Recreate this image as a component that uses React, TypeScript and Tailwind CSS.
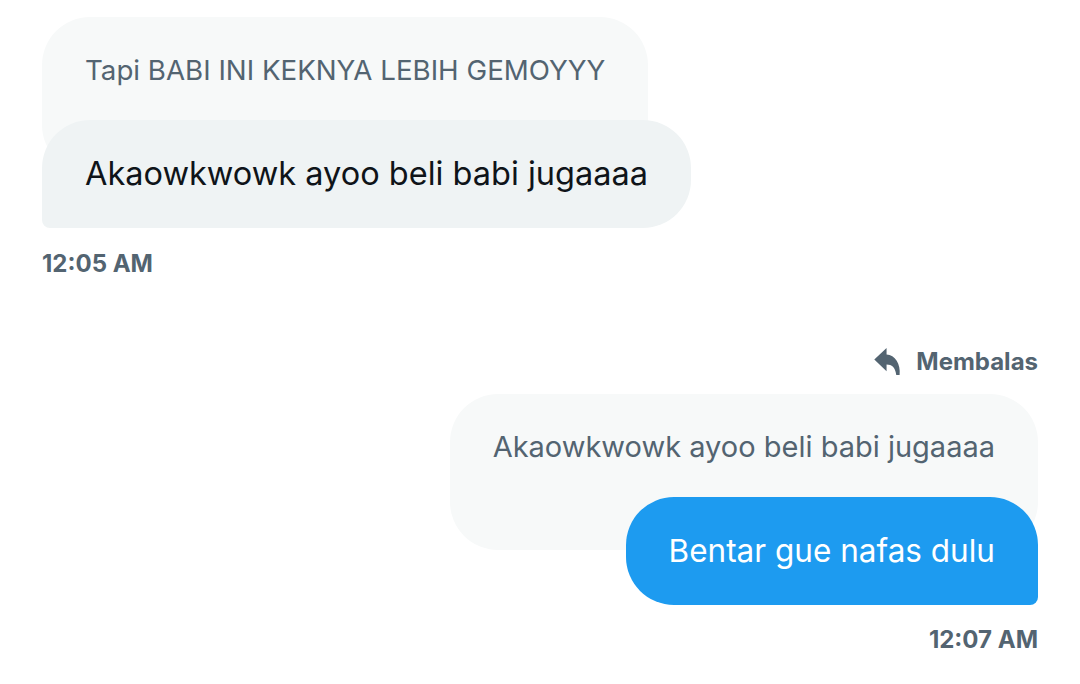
import React from 'react';

function ReplyIcon() {
  return (
    <svg width="31" height="31" viewBox="0 0 24 24" className="fill-[#536471]">
      <path d="M10.5 1.5 L1 10.5 L10.5 19.5 V14.4 C14.6 14.4 17.2 16.6 18 22.5 L20.6 22.5 C21.6 13.8 17 7 10.5 6.6 Z" />
    </svg>
  );
}

export default function App() {
  return (
    <div
      className="min-h-[684px] w-[1080px] bg-white px-[42px] pt-[17px] flex flex-col"
      style={{ fontFamily: 'Inter, "Liberation Sans", sans-serif' }}
    >
      {/* incoming message with quoted reply */}
      <div className="flex flex-col items-start">
        <div className="bg-[#f7f9f9] rounded-[48px] px-[43px] pt-[35px] pb-[85px]">
          <p className="text-[27.7px] leading-[36px] text-[#536471] whitespace-nowrap">
            Tapi BABI INI KEKNYA LEBIH GEMOYYY
          </p>
        </div>
        <div className="-mt-[53px] bg-[#eff3f4] rounded-[48px] rounded-bl-[8px] px-[43px] py-[34px]">
          <p className="text-[32.5px] leading-[40px] text-[#0f1419] whitespace-nowrap">
            Akaowkwowk ayoo beli babi jugaaaa
          </p>
        </div>
        <span className="mt-[22px] text-[24px] leading-[28px] font-bold text-[#536471]">12:05 AM</span>
      </div>

      {/* outgoing reply */}
      <div className="mt-[68px] flex flex-col items-end">
        <div className="flex items-center gap-[12px] text-[#536471]">
          <ReplyIcon />
          <span className="text-[24px] leading-[28px] font-bold">Membalas</span>
        </div>
        <div className="mt-[17px] bg-[#f7f9f9] rounded-[48px] px-[43px] pt-[35px] pb-[85px]">
          <p className="text-[29px] leading-[36px] text-[#536471] whitespace-nowrap">
            Akaowkwowk ayoo beli babi jugaaaa
          </p>
        </div>
        <div className="-mt-[53px] bg-[#1d9bf0] rounded-[48px] rounded-br-[8px] px-[43px] py-[34px]">
          <p className="text-[31.5px] leading-[40px] text-white whitespace-nowrap">Bentar gue nafas dulu</p>
        </div>
        <span className="mt-[21px] text-[24px] leading-[28px] font-bold text-[#536471]">12:07 AM</span>
      </div>
    </div>
  );
}
